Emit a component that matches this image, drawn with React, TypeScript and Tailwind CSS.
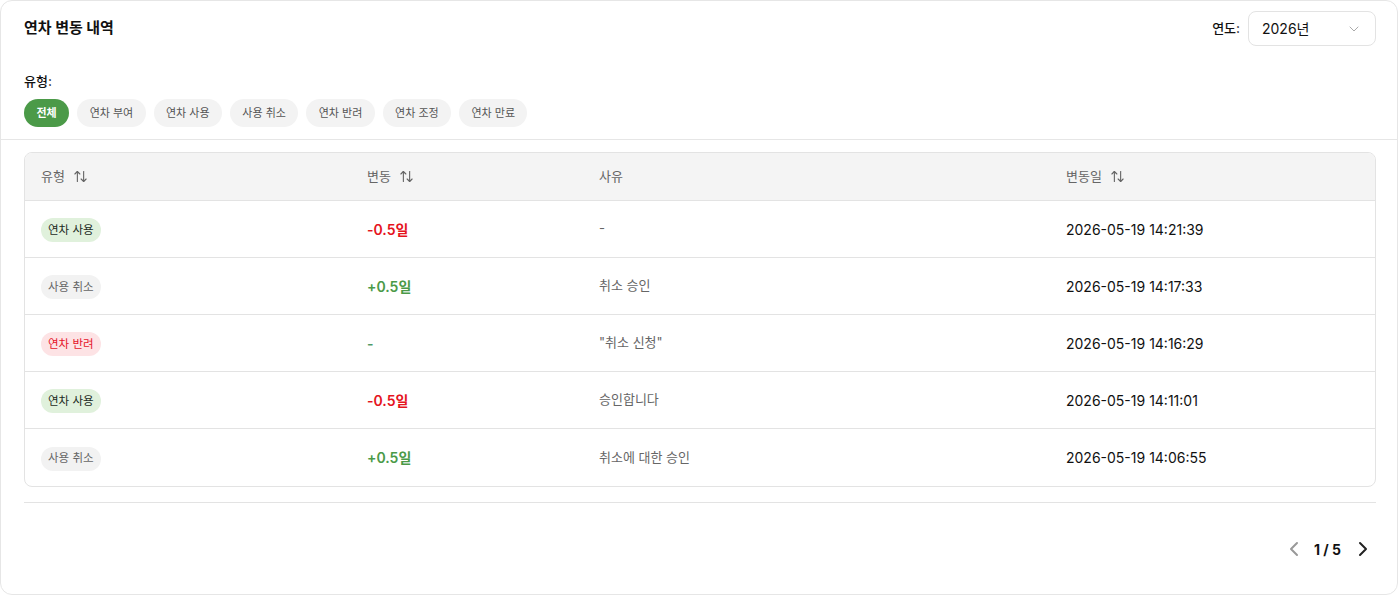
import { ArrowUpDown, ChevronDown, ChevronLeft, ChevronRight } from "lucide-react"

type Kind = "use" | "cancel" | "reject"

const filters = ["전체", "연차 부여", "연차 사용", "사용 취소", "연차 반려", "연차 조정", "연차 만료"]

const rows: { kind: Kind; label: string; delta: string; reason: string; date: string }[] = [
  { kind: "use", label: "연차 사용", delta: "-0.5일", reason: "-", date: "2026-05-19 14:21:39" },
  { kind: "cancel", label: "사용 취소", delta: "+0.5일", reason: "취소 승인", date: "2026-05-19 14:17:33" },
  { kind: "reject", label: "연차 반려", delta: "-", reason: "\"취소 신청\"", date: "2026-05-19 14:16:29" },
  { kind: "use", label: "연차 사용", delta: "-0.5일", reason: "승인합니다", date: "2026-05-19 14:11:01" },
  { kind: "cancel", label: "사용 취소", delta: "+0.5일", reason: "취소에 대한 승인", date: "2026-05-19 14:06:55" },
]

const badgeStyles: Record<Kind, string> = {
  use: "bg-[#e0f1dc] text-[#1c2a1c]",
  cancel: "bg-[#f2f2f2] text-[#666666]",
  reject: "bg-[#fde3e5] text-[#e5142a]",
}

function deltaClass(delta: string) {
  if (delta.startsWith("-") && delta.length > 1) return "text-[#e5141e] font-semibold"
  if (delta.startsWith("+")) return "text-[#4b9a48] font-semibold"
  return "text-[#4f9a68] font-semibold"
}

function SortHeader({ label }: { label: string }) {
  return (
    <div className="flex items-center gap-2">
      <span>{label}</span>
      <ArrowUpDown className="w-[15px] h-[15px] text-[#666]" strokeWidth={1.8} />
    </div>
  )
}

export default function App() {
  return (
    <div
      className="w-[1398px] h-[595px] bg-white"
      style={{ fontFamily: "Inter, 'Noto Sans CJK KR', sans-serif" }}
    >
      <div className="h-full bg-white border border-[#e6e6e6] rounded-xl flex flex-col">
        {/* 헤더 */}
        <div className="pl-[23px] pr-[21px] pt-[10px] flex items-center justify-between">
          <h2 className="text-[15px] font-bold text-[#111]">연차 변동 내역</h2>
          <div className="flex items-center gap-2">
            <span className="text-[13px] font-medium text-[#111]">연도:</span>
            <button
              type="button"
              className="w-[128px] h-[35px] px-[13px] flex items-center justify-between rounded-lg border border-[#e3e3e3] bg-white text-[14px] text-[#111]"
            >
              <span>2026년</span>
              <ChevronDown className="w-4 h-4 text-[#aaa]" strokeWidth={1.5} />
            </button>
          </div>
        </div>

        {/* 유형 필터 */}
        <div className="pl-[23px] pr-[21px] pt-[27px] pb-3 border-b border-[#e6e6e6]">
          <div className="text-[13px] font-medium text-[#111] leading-4">유형:</div>
          <div className="mt-[10px] flex gap-2">
            {filters.map((f, i) => (
              <button
                type="button"
                key={f}
                className={
                  i === 0
                    ? "h-7 px-[12.5px] rounded-full bg-[#4b9a48] text-white text-[11px] font-bold"
                    : "h-7 px-[12.4px] rounded-full bg-[#f3f3f3] text-[#555] text-[11px]"
                }
              >
                {f}
              </button>
            ))}
          </div>
        </div>

        {/* 테이블 */}
        <div className="pl-[23px] pr-[21px] pt-[12px]">
          <div className="rounded-lg border border-[#e3e3e3] overflow-hidden">
            <div className="h-12 bg-[#f4f4f4] border-b border-[#e3e3e3] flex items-center text-[13px] text-[#666]">
              <div className="w-[326px] px-4">
                <SortHeader label="유형" />
              </div>
              <div className="w-[232px] px-4">
                <SortHeader label="변동" />
              </div>
              <div className="w-[467px] px-4">사유</div>
              <div className="flex-1 px-4">
                <SortHeader label="변동일" />
              </div>
            </div>
            {rows.map((r, i) => (
              <div
                key={i}
                className={`h-[57px] flex items-center ${i < rows.length - 1 ? "border-b border-[#e3e3e3]" : ""}`}
              >
                <div className="w-[326px] px-4">
                  <span className={`inline-flex items-center h-6 px-[7px] rounded-full text-[11.5px] ${badgeStyles[r.kind]}`}>
                    {r.label}
                  </span>
                </div>
                <div className={`w-[232px] px-4 text-[14px] ${deltaClass(r.delta)}`}>{r.delta}</div>
                <div className="w-[467px] px-4 text-[13px] text-[#666]">{r.reason}</div>
                <div className="flex-1 px-4 text-[14px] text-[#111]">{r.date}</div>
              </div>
            ))}
          </div>
          <div className="mt-[15px] border-t border-[#e3e3e3]" />
        </div>

        {/* 페이지네이션 */}
        <div className="pl-[23px] pr-[22px] pt-[34px] flex justify-end items-center">
          <ChevronLeft className="w-6 h-6 text-[#999]" strokeWidth={2} />
          <span className="ml-[8px] text-[14px] font-bold text-[#111]">1 / 5</span>
          <ChevronRight className="ml-[10px] w-6 h-6 text-[#222]" strokeWidth={2} />
        </div>
      </div>
    </div>
  )
}
